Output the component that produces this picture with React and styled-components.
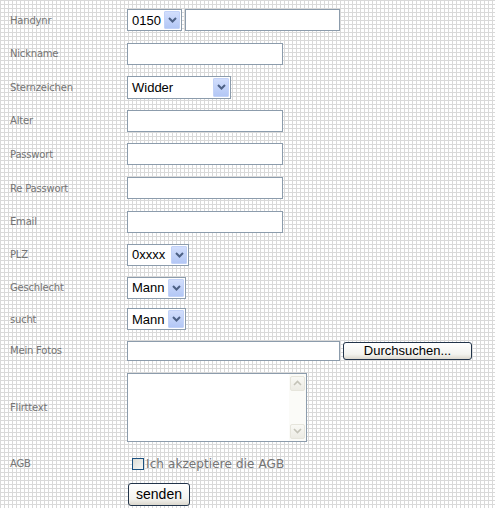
import React from 'react';
import styled, { createGlobalStyle } from 'styled-components';

const GlobalStyle = createGlobalStyle`
  html, body {
    margin: 0;
    padding: 0;
  }
  body {
    background-color: #ffffff;
    background-image:
      linear-gradient(90deg, #d9d9d9 1px, transparent 1px),
      linear-gradient(#d9d9d9 1px, transparent 1px);
    background-size: 4px 4px;
    font-family: "DejaVu Sans", Verdana, sans-serif;
  }
`;

const Form = styled.form`
  padding-top: 3px;
  width: 495px;
`;

const Row = styled.div`
  display: flex;
  align-items: center;
  height: ${p => p.$h}px;
`;

const Label = styled.div`
  width: 117px;
  padding-left: 10px;
  font-size: 10px;
  letter-spacing: -0.2px;
  color: #747474;
`;

const Field = styled.div`
  display: flex;
  align-items: center;
  gap: ${p => p.$gap || 0}px;
  padding-left: ${p => p.$indent || 0}px;
`;

const TextInput = styled.input`
  box-sizing: border-box;
  width: ${p => p.$w}px;
  height: ${p => p.$h || 22}px;
  margin: 0;
  padding: 0 3px;
  border: 1px solid #8c9cac;
  background: #fff;
  font: 13px "Liberation Sans", Arial, sans-serif;
  outline: none;
`;

const SelectBox = styled.div`
  box-sizing: border-box;
  display: flex;
  align-items: stretch;
  width: ${p => p.$w}px;
  height: ${p => p.$h || 22}px;
  padding: 1px;
  border: 1px solid #8c9cac;
  background: #fff;
  font: 13px "Liberation Sans", Arial, sans-serif;
  color: #000;
`;

const SelectText = styled.span`
  flex: 1;
  display: flex;
  align-items: center;
  padding-left: 3px;
`;

const ArrowBox = styled.span`
  box-sizing: border-box;
  width: 16px;
  display: flex;
  align-items: center;
  justify-content: center;
  border: 1px solid #c2d2f8;
  border-radius: 1px;
  background: linear-gradient(#d2defc, #b3c7f5);
`;

const Chevron = ({ color = '#4d6185', w = 2 }) => (
  <svg width="9" height="6" viewBox="0 0 9 6">
    <path d="M1 1 L4.5 4.5 L8 1" fill="none" stroke={color} strokeWidth={w} />
  </svg>
);

const Select = ({ value, w, h }) => (
  <SelectBox $w={w} $h={h}>
    <SelectText>{value}</SelectText>
    <ArrowBox>
      <Chevron />
    </ArrowBox>
  </SelectBox>
);

const Button = styled.button`
  box-sizing: border-box;
  width: ${p => p.$w}px;
  height: ${p => p.$h}px;
  margin: 0 0 0 ${p => p.$ml || 0}px;
  padding: 0;
  border: 1px solid #22344a;
  border-radius: 3px;
  background: linear-gradient(#ffffff, #f3f3ef 70%, #dcd8ce);
  font: ${p => p.$fs || 13}px "Liberation Sans", Arial, sans-serif;
  color: #000;
`;

const AreaBox = styled.div`
  box-sizing: border-box;
  display: flex;
  width: 180px;
  height: 69px;
  border: 1px solid #8c9cac;
  background: #fff;
`;

const AreaInput = styled.textarea`
  flex: 1;
  border: none;
  margin: 0;
  padding: 2px;
  resize: none;
  outline: none;
  background: transparent;
`;

const ScrollTrack = styled.div`
  box-sizing: border-box;
  width: 17px;
  padding: 2px 1px 2px 1px;
  display: flex;
  flex-direction: column;
  justify-content: space-between;
  background: #fbfbf8;
`;

const ScrollBtn = styled.span`
  box-sizing: border-box;
  height: 15px;
  display: flex;
  align-items: center;
  justify-content: center;
  border: 1px solid #e6e5dc;
  border-radius: 2px;
  background: linear-gradient(#f9f9f5, #ecebe4);
  svg {
    transform: ${p => (p.$up ? 'rotate(180deg)' : 'none')};
  }
`;

const Check = styled.span`
  box-sizing: border-box;
  width: 12px;
  height: 12px;
  border: 1px solid #1c5180;
  background: linear-gradient(135deg, #dcdcd5, #f8f8f6);
`;

const CheckLabel = styled.span`
  font-size: 12px;
  letter-spacing: 0.1px;
  color: #747474;
`;

export default function App() {
  return (
    <>
      <GlobalStyle />
      <Form>
        <Row $h={34}>
          <Label>Handynr</Label>
          <Field $gap={3}>
            <Select value="0150" w={55} />
            <TextInput $w={155} />
          </Field>
        </Row>
        <Row $h={33}>
          <Label>Nickname</Label>
          <Field><TextInput $w={156} /></Field>
        </Row>
        <Row $h={34}>
          <Label>Sternzeichen</Label>
          <Field><Select value="Widder" w={104} h={23} /></Field>
        </Row>
        <Row $h={33}>
          <Label>Alter</Label>
          <Field><TextInput $w={156} /></Field>
        </Row>
        <Row $h={34}>
          <Label>Passwort</Label>
          <Field><TextInput $w={156} type="password" /></Field>
        </Row>
        <Row $h={34}>
          <Label>Re Passwort</Label>
          <Field><TextInput $w={156} type="password" /></Field>
        </Row>
        <Row $h={33}>
          <Label>Email</Label>
          <Field><TextInput $w={156} /></Field>
        </Row>
        <Row $h={33}>
          <Label>PLZ</Label>
          <Field><Select value="0xxxx" w={62} /></Field>
        </Row>
        <Row $h={33}>
          <Label>Geschlecht</Label>
          <Field><Select value="Mann" w={59} /></Field>
        </Row>
        <Row $h={30}>
          <Label>sucht</Label>
          <Field><Select value="Mann" w={59} /></Field>
        </Row>
        <Row $h={33}>
          <Label>Mein Fotos</Label>
          <Field $gap={3}>
            <TextInput $w={213} $h={20} />
            <Button type="button" $w={129} $h={18}>Durchsuchen...</Button>
          </Field>
        </Row>
        <Row $h={80}>
          <Label>Flirttext</Label>
          <Field>
            <AreaBox>
              <AreaInput />
              <ScrollTrack>
                <ScrollBtn $up><Chevron color="#c4c3b8" w={1.6} /></ScrollBtn>
                <ScrollBtn><Chevron color="#c4c3b8" w={1.6} /></ScrollBtn>
              </ScrollTrack>
            </AreaBox>
          </Field>
        </Row>
        <Row $h={33}>
          <Label>AGB</Label>
          <Field $gap={2} $indent={5}>
            <Check />
            <CheckLabel>Ich akzeptiere die AGB</CheckLabel>
          </Field>
        </Row>
        <Row $h={28}>
          <Label />
          <Field>
            <Button type="button" $w={62} $h={23} $ml={1} $fs={14}>senden</Button>
          </Field>
        </Row>
      </Form>
    </>
  );
}
